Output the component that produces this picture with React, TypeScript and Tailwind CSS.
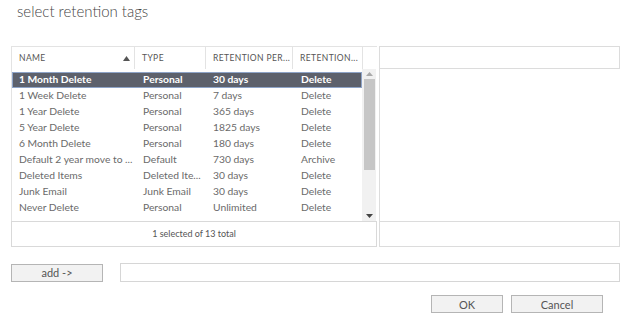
const rows = [
  { name: '1 Month Delete', type: 'Personal', period: '30 days', action: 'Delete' },
  { name: '1 Week Delete', type: 'Personal', period: '7 days', action: 'Delete' },
  { name: '1 Year Delete', type: 'Personal', period: '365 days', action: 'Delete' },
  { name: '5 Year Delete', type: 'Personal', period: '1825 days', action: 'Delete' },
  { name: '6 Month Delete', type: 'Personal', period: '180 days', action: 'Delete' },
  { name: 'Default 2 year move to ...', type: 'Default', period: '730 days', action: 'Archive' },
  { name: 'Deleted Items', type: 'Deleted Ite...', period: '30 days', action: 'Delete' },
  { name: 'Junk Email', type: 'Junk Email', period: '30 days', action: 'Delete' },
  { name: 'Never Delete', type: 'Personal', period: 'Unlimited', action: 'Delete' },
];

export default function App() {
  return (
    <div
      className="w-[627px] h-[319px] bg-white text-[#6a6a6a] overflow-hidden"
      style={{ fontFamily: 'Lato, "Open Sans", sans-serif' }}
    >
      {/* Title */}
      <div className="h-[46px] pl-[17px] pt-[1px] text-[15px] font-light text-[#444] leading-[20px]">
        select retention tags
      </div>

      <div className="flex pl-[11px]">
        {/* Left list */}
        <div className="w-[366px] flex flex-col">
          <div className="h-[23px] flex border-t border-l border-[#e3e3e3] text-[8.5px] tracking-[0.4px] text-[#555] items-stretch">
            <div className="w-[123px] flex items-center justify-between pl-[7px] pr-[4px] border-r border-[#e3e3e3]">
              <span>NAME</span>
              <svg width="7" height="5" viewBox="0 0 7 5">
                <path d="M0 5 L3.5 0 L7 5 Z" fill="#555" />
              </svg>
            </div>
            <div className="w-[71px] flex items-center pl-[7px] border-r border-[#e3e3e3]">TYPE</div>
            <div className="w-[87px] flex items-center pl-[7px] border-r border-[#e3e3e3]">RETENTION PER...</div>
            <div className="w-[70px] flex items-center pl-[7px] border-r border-[#e3e3e3]">RETENTION...</div>
            <div className="flex-1" />
          </div>

          <div className="h-[152px] flex border-l border-[#e3e3e3]">
            <div className="w-[351px] pt-[3px] text-[10.3px]">
              {rows.map((r, i) => {
                const sel = i === 0;
                return (
                  <div
                    key={r.name}
                    className={
                      sel
                        ? 'h-[16px] flex items-center bg-[#5d616c] text-white font-bold border border-[#8ea4c8]'
                        : 'h-[16px] flex items-center border border-transparent'
                    }
                  >
                    <div className="w-[123px] pl-[6px] whitespace-nowrap">{r.name}</div>
                    <div className="w-[71px] pl-[7px] whitespace-nowrap">{r.type}</div>
                    <div className="w-[87px] pl-[6px] whitespace-nowrap">{r.period}</div>
                    <div className="flex-1 pl-[7px] whitespace-nowrap">{r.action}</div>
                  </div>
                );
              })}
            </div>
            {/* Scrollbar */}
            <div className="w-[14px] bg-[#f1f1f1] flex flex-col items-center">
              <div className="h-[10px] flex items-center justify-center">
                <svg width="7" height="4" viewBox="0 0 7 4">
                  <path d="M0 4 L3.5 0 L7 4 Z" fill="#aaa" />
                </svg>
              </div>
              <div className="w-[11px] h-[91px] bg-[#c6c6c6]" />
              <div className="flex-1" />
              <div className="h-[10px] flex items-center justify-center">
                <svg width="7" height="4" viewBox="0 0 7 4">
                  <path d="M0 0 L3.5 4 L7 0 Z" fill="#444" />
                </svg>
              </div>
            </div>
            <div className="w-[1px]" />
          </div>

          <div className="h-[26px] border border-[#d9d9d9] flex items-center justify-center text-[9px] text-[#555]">
            1 selected of 13 total
          </div>
        </div>

        {/* Right panel */}
        <div className="w-[241px] ml-[2px] flex flex-col">
          <div className="h-[23px] border border-[#dcdcdc]" />
          <div className="h-[152px] border-l border-[#dcdcdc]" />
          <div className="h-[26px] border border-[#dcdcdc]" />
        </div>
      </div>

      {/* Add row */}
      <div className="flex items-center mt-[16px] pl-[11px]">
        <button className="w-[92px] h-[18px] bg-[#f2f2f2] border border-[#b5b5b5] text-[11px] text-[#555] leading-none">
          add -&gt;
        </button>
        <div className="ml-[17px] w-[500px] h-[19px] border border-[#d6d6d6] bg-white" />
      </div>

      {/* Footer buttons */}
      <div className="flex justify-end gap-[8px] mt-[13px] pr-[24px]">
        <button className="w-[72px] h-[18px] bg-[#f2f2f2] border border-[#b5b5b5] text-[11px] text-[#555] leading-none">
          OK
        </button>
        <button className="w-[92px] h-[18px] bg-[#f2f2f2] border border-[#b5b5b5] text-[11px] text-[#555] leading-none">
          Cancel
        </button>
      </div>
    </div>
  );
}
